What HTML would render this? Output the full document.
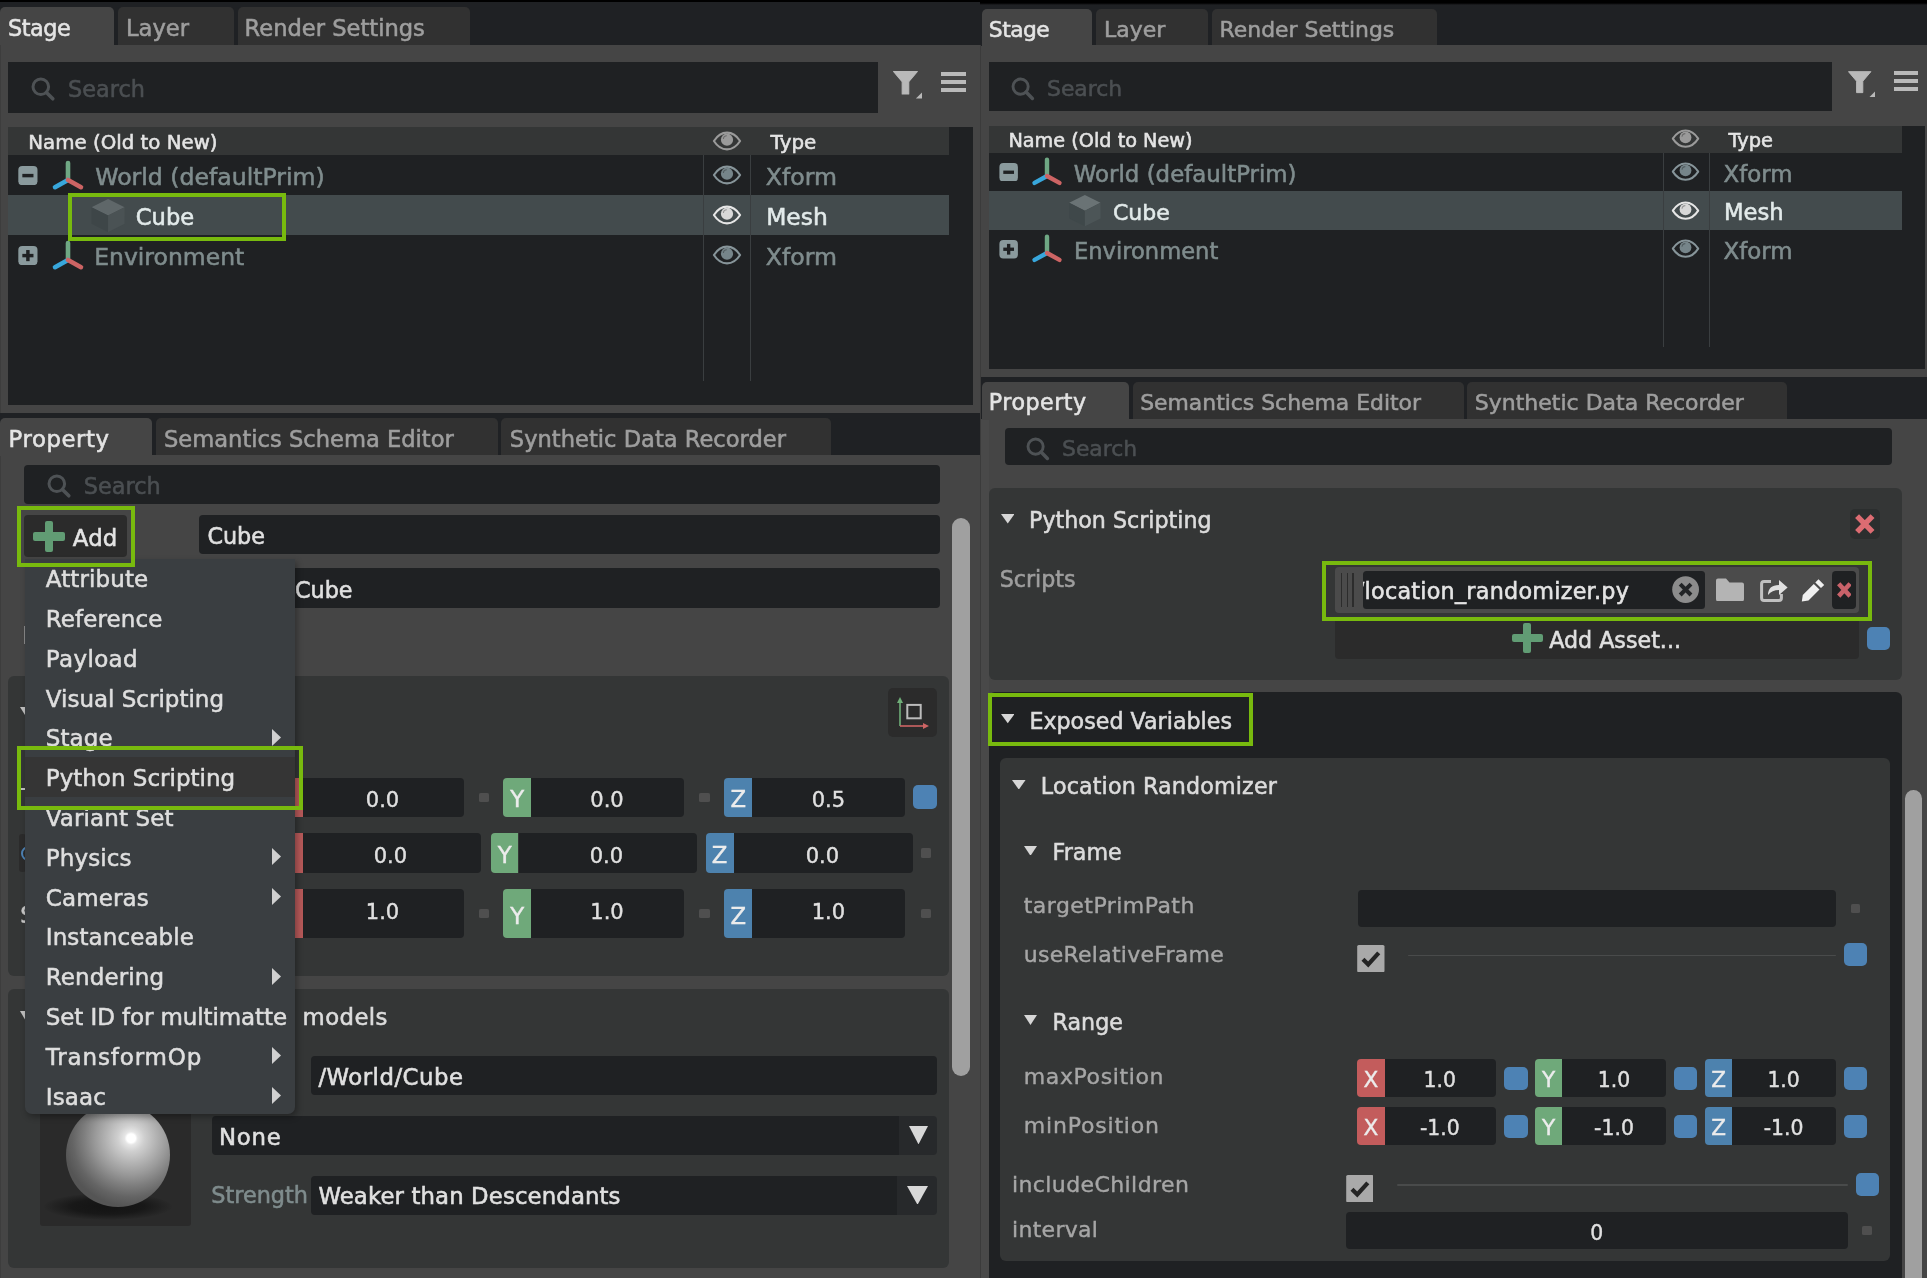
<!DOCTYPE html>
<html><head><meta charset="utf-8"><title>Stage and Property panels</title>
<style>
html,body{margin:0;padding:0;background:#454545;overflow:hidden;}
body{width:1927px;height:1278px;position:relative;overflow:hidden;font-family:"DejaVu Sans","Liberation Sans",sans-serif;}
.b{position:absolute;display:block;}
.t{position:absolute;white-space:nowrap;line-height:1;-webkit-text-stroke:0.55px currentColor;}
#root{position:absolute;left:0;top:0;width:1927px;height:1278px;overflow:hidden;will-change:transform;}
</style></head><body><div id="root">
<div class="b" style="left:0px;top:0px;width:980px;height:2px;background:#000;"></div>
<div class="b" style="left:0px;top:2px;width:980px;height:43px;background:#1f2124;"></div>
<div class="b" style="left:0px;top:45px;width:980px;height:368px;background:#454545;"></div>
<div class="b" style="left:0px;top:413px;width:980px;height:43px;background:#1f2124;"></div>
<div class="b" style="left:0px;top:455.4px;width:980px;height:822.6px;background:#454545;"></div>
<div class="b" style="left:0px;top:7px;width:114.4px;height:39px;background:#454545;border-radius:5px 5px 0 0;"></div>
<div class="b" style="left:118.2px;top:7px;width:115.8px;height:37.6px;background:#313131;border-radius:5px 5px 0 0;"></div>
<div class="b" style="left:237.7px;top:7px;width:231.9px;height:37.6px;background:#313131;border-radius:5px 5px 0 0;"></div>
<div class="t" style="left:8px;top:17px;font-size:22.4px;color:#e4e4e4;letter-spacing:-0.5px;">Stage</div>
<div class="t" style="left:125.9px;top:17px;font-size:22.7px;color:#9e9e9e;">Layer</div>
<div class="t" style="left:244.6px;top:17px;font-size:22.6px;color:#9e9e9e;">Render Settings</div>
<div class="b" style="left:7.6px;top:61.8px;width:870.1px;height:50.8px;background:#1f2123;"></div>
<svg class="b" style="left:29.7px;top:75.8px" width="27.6" height="27.6" viewBox="-10.8 -10.8 27.6 27.6"><circle cx="0" cy="0" r="7.8" fill="none" stroke="#4e5255" stroke-width="3"/><path d="M5.616 5.616 L12 12" stroke="#4e5255" stroke-width="3.6" stroke-linecap="round"/></svg>
<div class="t" style="left:68px;top:78px;font-size:22.4px;color:#4b4f52;">Search</div>
<svg class="b" style="left:893px;top:71px" width="29.5" height="27.5" viewBox="0 0 29 27"><path d="M0.5 0.5 L24 0.5 L15.5 10.5 L15.5 22.5 L9 22.5 L9 10.5 Z" fill="#b9b9b9" stroke="#b9b9b9" stroke-linejoin="round" stroke-width="1"/><path d="M28.5 21 L28.5 27 L22.5 27 Z" fill="#b9b9b9"/></svg>
<div class="b" style="left:941.3px;top:72px;width:24.3px;height:4.2px;background:#b9b9b9;"></div>
<div class="b" style="left:941.3px;top:79.9px;width:24.3px;height:4.2px;background:#b9b9b9;"></div>
<div class="b" style="left:941.3px;top:87.8px;width:24.3px;height:4.2px;background:#b9b9b9;"></div>
<div class="b" style="left:7.6px;top:127px;width:965px;height:277.6px;background:#1f2123;"></div>
<div class="b" style="left:7.6px;top:127px;width:941.4px;height:28.2px;background:#343636;"></div>
<div class="t" style="left:28.3px;top:133px;font-size:19.8px;color:#e4e4e4;">Name (Old to New)</div>
<div class="t" style="left:770.6px;top:133px;font-size:19.9px;color:#e4e4e4;">Type</div>
<svg class="b" style="left:710.6px;top:130.3px" width="32" height="22" viewBox="-16 -11 32 22"><path d="M-13.1 0 C-8.5 -7.2 -3.5 -8.4 0 -8.4 C3.5 -8.4 8.5 -7.2 13.1 0 C8.5 7.2 3.5 8.4 0 8.4 C-3.5 8.4 -8.5 7.2 -13.1 0 Z" fill="none" stroke="#9a9a9a" stroke-width="2.1" stroke-linejoin="round"/><circle cx="0" cy="-1.3" r="6.1" fill="#9a9a9a"/><path d="M-3.6 -2 A3.4 3.4 0 0 1 -0.2 -5.2" fill="none" stroke="#0000004d" stroke-width="1.1"/></svg>
<div class="b" style="left:7.6px;top:195.2px;width:941.4px;height:39.8px;background:#434b4d;"></div>
<div class="b" style="left:702.6px;top:155.2px;width:1.2px;height:225.8px;background:#3a3e40;"></div>
<div class="b" style="left:749.6px;top:155.2px;width:1.2px;height:225.8px;background:#3a3e40;"></div>
<svg class="b" style="left:18.3px;top:165.8px" width="19.8" height="19.2" viewBox="0 0 20 20"><rect x="0" y="0" width="20" height="20" rx="4.2" fill="#8a9a9d"/><rect x="4.2" y="8.2" width="11.6" height="3.6" fill="#1f2123"/></svg>
<svg class="b" style="left:47.6px;top:158.2px" width="40" height="36" viewBox="-20 -22 40 36" ><path d="M0 0 L0 -17" stroke="#6fa884" stroke-width="4.6" stroke-linecap="round"/><path d="M0 0 L-13 7.2" stroke="#38a7dc" stroke-width="4.6" stroke-linecap="round"/><path d="M0 0 L13 7.2" stroke="#cd6464" stroke-width="4.6" stroke-linecap="round"/></svg>
<div class="t" style="left:95.2px;top:166px;font-size:23.6px;color:#7f8c8d;">World (defaultPrim)</div>
<svg class="b" style="left:710.6px;top:164.1px" width="32" height="22" viewBox="-16 -11 32 22"><path d="M-13.1 0 C-8.5 -7.2 -3.5 -8.4 0 -8.4 C3.5 -8.4 8.5 -7.2 13.1 0 C8.5 7.2 3.5 8.4 0 8.4 C-3.5 8.4 -8.5 7.2 -13.1 0 Z" fill="none" stroke="#87959a" stroke-width="2.1" stroke-linejoin="round"/><circle cx="0" cy="-1.3" r="6.1" fill="#76858a"/><path d="M-3.6 -2 A3.4 3.4 0 0 1 -0.2 -5.2" fill="none" stroke="#0000004d" stroke-width="1.1"/></svg>
<div class="t" style="left:765.8px;top:166px;font-size:23.6px;color:#7f8c8d;">Xform</div>
<svg class="b" style="left:90.5px;top:199.4px" width="34.1" height="33.1" viewBox="0 0 32 32"><path d="M16 0 L32 8 L16 16 L0 8 Z" fill="#5f6769"/><path d="M0 8 L16 16 L16 32 L0 24 Z" fill="#3e4648"/><path d="M32 8 L16 16 L16 32 L32 24 Z" fill="#4a5254"/></svg>
<div class="t" style="left:135.8px;top:206px;font-size:22.6px;color:#e2eaea;">Cube</div>
<svg class="b" style="left:710.6px;top:204.1px" width="32" height="22" viewBox="-16 -11 32 22"><path d="M-13.1 0 C-8.5 -7.2 -3.5 -8.4 0 -8.4 C3.5 -8.4 8.5 -7.2 13.1 0 C8.5 7.2 3.5 8.4 0 8.4 C-3.5 8.4 -8.5 7.2 -13.1 0 Z" fill="none" stroke="#e6e6e6" stroke-width="2.1" stroke-linejoin="round"/><circle cx="0" cy="-1.3" r="6.1" fill="#d8d8d8"/><path d="M-3.6 -2 A3.4 3.4 0 0 1 -0.2 -5.2" fill="none" stroke="#0000004d" stroke-width="1.1"/></svg>
<div class="t" style="left:766.2px;top:206px;font-size:23.4px;color:#e2eaea;">Mesh</div>
<div class="b" style="left:67.9px;top:192.9px;width:218.3px;height:48.2px;border:4px solid #78ba0e;box-sizing:border-box"></div>
<svg class="b" style="left:18.3px;top:245.8px" width="19.8" height="19.2" viewBox="0 0 20 20"><rect x="0" y="0" width="20" height="20" rx="4.2" fill="#8a9a9d"/><rect x="4.2" y="8.2" width="11.6" height="3.6" fill="#1f2123"/><rect x="8.2" y="4.2" width="3.6" height="11.6" fill="#1f2123"/></svg>
<svg class="b" style="left:47.6px;top:238.2px" width="40" height="36" viewBox="-20 -22 40 36" ><path d="M0 0 L0 -17" stroke="#6fa884" stroke-width="4.6" stroke-linecap="round"/><path d="M0 0 L-13 7.2" stroke="#38a7dc" stroke-width="4.6" stroke-linecap="round"/><path d="M0 0 L13 7.2" stroke="#cd6464" stroke-width="4.6" stroke-linecap="round"/></svg>
<div class="t" style="left:94.2px;top:246px;font-size:23.5px;color:#7f8c8d;">Environment</div>
<svg class="b" style="left:710.6px;top:243.9px" width="32" height="22" viewBox="-16 -11 32 22"><path d="M-13.1 0 C-8.5 -7.2 -3.5 -8.4 0 -8.4 C3.5 -8.4 8.5 -7.2 13.1 0 C8.5 7.2 3.5 8.4 0 8.4 C-3.5 8.4 -8.5 7.2 -13.1 0 Z" fill="none" stroke="#87959a" stroke-width="2.1" stroke-linejoin="round"/><circle cx="0" cy="-1.3" r="6.1" fill="#76858a"/><path d="M-3.6 -2 A3.4 3.4 0 0 1 -0.2 -5.2" fill="none" stroke="#0000004d" stroke-width="1.1"/></svg>
<div class="t" style="left:765.8px;top:246px;font-size:23.6px;color:#7f8c8d;">Xform</div>
<div class="b" style="left:0px;top:418.3px;width:152px;height:38.1px;background:#454545;border-radius:5px 5px 0 0;"></div>
<div class="b" style="left:156.4px;top:418.3px;width:341.2px;height:37.1px;background:#313131;border-radius:5px 5px 0 0;"></div>
<div class="b" style="left:501.4px;top:418.3px;width:329.3px;height:37.1px;background:#313131;border-radius:5px 5px 0 0;"></div>
<div class="t" style="left:8.6px;top:428px;font-size:22.8px;color:#e4e4e4;letter-spacing:0.55px;">Property</div>
<div class="t" style="left:164px;top:428px;font-size:22.6px;color:#9e9e9e;">Semantics Schema Editor</div>
<div class="t" style="left:509.8px;top:428px;font-size:22.6px;color:#9e9e9e;">Synthetic Data Recorder</div>
<div class="b" style="left:24.2px;top:464.8px;width:915.4px;height:39.5px;background:#1f2123;border-radius:4px;"></div>
<svg class="b" style="left:46.3px;top:473px" width="27.6" height="27.6" viewBox="-10.8 -10.8 27.6 27.6"><circle cx="0" cy="0" r="7.8" fill="none" stroke="#4e5255" stroke-width="3"/><path d="M5.616 5.616 L12 12" stroke="#4e5255" stroke-width="3.6" stroke-linecap="round"/></svg>
<div class="t" style="left:83.8px;top:475px;font-size:22.4px;color:#4b4f52;">Search</div>
<div class="b" style="left:24.2px;top:515px;width:102.8px;height:42px;background:#2b2b2b;border-radius:4px;"></div>
<div class="b" style="left:44.56px;top:520.7px;width:8.48px;height:31.6px;background:#619c74;border-radius:2px;"></div>
<div class="b" style="left:32.8px;top:532.26px;width:32px;height:8.48px;background:#619c74;border-radius:2px;"></div>
<div class="t" style="left:72.8px;top:527px;font-size:22.8px;color:#e4e4e4;letter-spacing:0.2px;">Add</div>
<div class="b" style="left:199px;top:515px;width:740.6px;height:38.8px;background:#1f2123;border-radius:4px;"></div>
<div class="t" style="left:207.4px;top:525px;font-size:22.3px;color:#e0e0e0;">Cube</div>
<div class="b" style="left:199px;top:568.3px;width:740.6px;height:39.4px;background:#1f2123;border-radius:4px;"></div>
<div class="t" style="left:295px;top:579px;font-size:22.3px;color:#e0e0e0;">Cube</div>
<div class="b" style="left:23.5px;top:626px;width:2px;height:18px;background:#8a8a8a;"></div>
<div class="b" style="left:952.3px;top:517.5px;width:17.7px;height:558.3px;background:#a0a0a0;border-radius:9px;"></div>
<div class="b" style="left:8px;top:676px;width:941px;height:300px;background:#343636;border-radius:6px;"></div>
<div class="b" style="left:888px;top:687.8px;width:49px;height:49.2px;background:#2b2b2b;border-radius:5px;"></div>
<svg class="b" style="left:894.8px;top:696.2px;" width="34" height="34" viewBox="0 0 34 34"><path d="M5 30 L5 6" stroke="#6fae78" stroke-width="1.6"/><path d="M5 1 L2 7 L8 7 Z" fill="#6fae78"/><path d="M5 30 L29 30" stroke="#cd6464" stroke-width="1.6"/><path d="M34 30 L28 27 L28 33 Z" fill="#cd6464"/><rect x="12.3" y="8.9" width="13.4" height="13.4" fill="none" stroke="#bcbcbc" stroke-width="2"/></svg>
<svg class="b" style="left:19.6px;top:707px;" width="10" height="8" viewBox="0 0 10 8"><path d="M0 0 L10 0 L5 8 Z" fill="#c0c0c0"/></svg>
<div class="b" style="left:285px;top:777.5px;width:17.6px;height:39.5px;background:#b65959;border-radius:4px 0 0 4px;"></div>
<div class="b" style="left:302.6px;top:777.5px;width:161px;height:39.5px;background:#1f2123;border-radius:0 4px 4px 0;"></div>
<div class="t" style="left:382.5px;top:790px;font-size:21px;color:#e0e0e0;-webkit-text-stroke-width:0.4px;transform:translateX(-50%);">0.0</div>
<div class="b" style="left:478.8px;top:792.8px;width:10.2px;height:9px;background:#4f4f4f;border-radius:1.5px;"></div>
<div class="b" style="left:503.2px;top:777.5px;width:28.2px;height:39.5px;background:#6fa97a;border-radius:4px 0 0 4px;"></div>
<div class="b" style="left:531.4px;top:777.5px;width:153.1px;height:39.5px;background:#1f2123;border-radius:0 4px 4px 0;"></div>
<div class="t" style="left:517.3px;top:788px;font-size:22.8px;color:#ececec;-webkit-text-stroke-width:0.4px;transform:translateX(-50%);">Y</div>
<div class="t" style="left:607px;top:790px;font-size:21px;color:#e0e0e0;-webkit-text-stroke-width:0.4px;transform:translateX(-50%);">0.0</div>
<div class="b" style="left:699px;top:792.8px;width:11px;height:9px;background:#4f4f4f;border-radius:1.5px;"></div>
<div class="b" style="left:724px;top:777.5px;width:28.4px;height:39.5px;background:#4d82ae;border-radius:4px 0 0 4px;"></div>
<div class="b" style="left:752.4px;top:777.5px;width:152.8px;height:39.5px;background:#1f2123;border-radius:0 4px 4px 0;"></div>
<div class="t" style="left:738.2px;top:788px;font-size:22.8px;color:#ececec;-webkit-text-stroke-width:0.4px;transform:translateX(-50%);">Z</div>
<div class="t" style="left:828.4px;top:790px;font-size:21px;color:#e0e0e0;-webkit-text-stroke-width:0.4px;transform:translateX(-50%);">0.5</div>
<div class="b" style="left:913.4px;top:785px;width:24.1px;height:24.3px;background:#4d82b4;border-radius:5px;"></div>
<div class="b" style="left:285px;top:833px;width:17.6px;height:40px;background:#b65959;border-radius:4px 0 0 4px;"></div>
<div class="b" style="left:302.6px;top:833px;width:178.7px;height:40px;background:#1f2123;border-radius:0 4px 4px 0;"></div>
<div class="t" style="left:390.4px;top:846px;font-size:21px;color:#e0e0e0;-webkit-text-stroke-width:0.4px;transform:translateX(-50%);">0.0</div>
<div class="b" style="left:490.8px;top:833px;width:27.7px;height:40px;background:#6fa97a;border-radius:4px 0 0 4px;"></div>
<div class="b" style="left:518.5px;top:833px;width:178.7px;height:40px;background:#1f2123;border-radius:0 4px 4px 0;"></div>
<div class="t" style="left:504.65px;top:844px;font-size:22.8px;color:#ececec;-webkit-text-stroke-width:0.4px;transform:translateX(-50%);">Y</div>
<div class="t" style="left:606.4px;top:846px;font-size:21px;color:#e0e0e0;-webkit-text-stroke-width:0.4px;transform:translateX(-50%);">0.0</div>
<div class="b" style="left:705.6px;top:833px;width:28px;height:40px;background:#4d82ae;border-radius:4px 0 0 4px;"></div>
<div class="b" style="left:733.6px;top:833px;width:179.3px;height:40px;background:#1f2123;border-radius:0 4px 4px 0;"></div>
<div class="t" style="left:719.6px;top:844px;font-size:22.8px;color:#ececec;-webkit-text-stroke-width:0.4px;transform:translateX(-50%);">Z</div>
<div class="t" style="left:822.4px;top:846px;font-size:21px;color:#e0e0e0;-webkit-text-stroke-width:0.4px;transform:translateX(-50%);">0.0</div>
<div class="b" style="left:920.5px;top:848.4px;width:10.2px;height:9.2px;background:#4f4f4f;border-radius:1.5px;"></div>
<div class="b" style="left:19px;top:834px;width:7px;height:38px;background:#2b2b2b;border-radius:3px;"></div>
<div class="b" style="left:21.4px;top:846px;width:15px;height:15px;border:2.5px solid #4d82b4;border-radius:50%;box-sizing:border-box"></div>
<div class="b" style="left:20.6px;top:787.5px;width:5.4px;height:2px;background:#c0c0c0;"></div>
<div class="t" style="left:20.2px;top:904px;font-size:22.8px;color:#c8c8c8;">S</div>
<div class="b" style="left:285px;top:889px;width:17.6px;height:49px;background:#b65959;border-radius:4px 0 0 4px;"></div>
<div class="b" style="left:302.6px;top:889px;width:161px;height:49px;background:#1f2123;border-radius:0 4px 4px 0;"></div>
<div class="t" style="left:382.5px;top:902px;font-size:21px;color:#e0e0e0;-webkit-text-stroke-width:0.4px;transform:translateX(-50%);">1.0</div>
<div class="b" style="left:478.8px;top:908.6px;width:10.2px;height:9px;background:#4f4f4f;border-radius:1.5px;"></div>
<div class="b" style="left:503.2px;top:889px;width:28.2px;height:49px;background:#6fa97a;border-radius:4px 0 0 4px;"></div>
<div class="b" style="left:531.4px;top:889px;width:153.1px;height:49px;background:#1f2123;border-radius:0 4px 4px 0;"></div>
<div class="t" style="left:517.3px;top:905px;font-size:22.8px;color:#ececec;-webkit-text-stroke-width:0.4px;transform:translateX(-50%);">Y</div>
<div class="t" style="left:607px;top:902px;font-size:21px;color:#e0e0e0;-webkit-text-stroke-width:0.4px;transform:translateX(-50%);">1.0</div>
<div class="b" style="left:699px;top:908.6px;width:11px;height:9px;background:#4f4f4f;border-radius:1.5px;"></div>
<div class="b" style="left:724px;top:889px;width:28.4px;height:49px;background:#4d82ae;border-radius:4px 0 0 4px;"></div>
<div class="b" style="left:752.4px;top:889px;width:152.8px;height:49px;background:#1f2123;border-radius:0 4px 4px 0;"></div>
<div class="t" style="left:738.2px;top:905px;font-size:22.8px;color:#ececec;-webkit-text-stroke-width:0.4px;transform:translateX(-50%);">Z</div>
<div class="t" style="left:828.4px;top:902px;font-size:21px;color:#e0e0e0;-webkit-text-stroke-width:0.4px;transform:translateX(-50%);">1.0</div>
<div class="b" style="left:920.5px;top:908.6px;width:10.2px;height:9px;background:#4f4f4f;border-radius:1.5px;"></div>
<div class="b" style="left:8px;top:988.6px;width:941px;height:279.7px;background:#343636;border-radius:6px;"></div>
<svg class="b" style="left:19.6px;top:1011px;" width="10" height="8.5" viewBox="0 0 10 8.5"><path d="M0 0 L10 0 L5 8.5 Z" fill="#c0c0c0"/></svg>
<div class="t" style="right:1631.5px;top:1006px;font-size:22.8px;color:#dcdcdc">Materials on selected</div>
<div class="t" style="left:302.6px;top:1006px;font-size:22.8px;color:#dcdcdc;letter-spacing:0.4px;">models</div>
<div class="t" style="left:48px;top:701px;font-size:22.8px;color:#dcdcdc">Transform</div>
<div class="b" style="left:310.7px;top:1056px;width:626.3px;height:39.4px;background:#1f2123;border-radius:4px;"></div>
<div class="t" style="left:318.4px;top:1066px;font-size:22.8px;color:#e0e0e0;letter-spacing:0.5px;">/World/Cube</div>
<div class="b" style="left:40.3px;top:1075px;width:150.3px;height:151.2px;background:#2a2a2a;border-radius:3px;"></div>
<div class="b" style="left:44px;top:1193px;width:128px;height:27px;border-radius:50%;background:radial-gradient(ellipse at center,#131313 0%,#181818 40%,#2b2b2b00 72%)"></div>
<div class="b" style="left:65.8px;top:1102.9px;width:104.6px;height:104.6px;border-radius:50%;background:radial-gradient(circle at 62.6% 33.9%,#ffffff 0%,#ffffff 4.6%,#e6e6e6 7%,#cfcfcf 14%,#b4b4b4 26%,#9a9a9a 38%,#7e7e7e 50%,#646464 62%,#555555 72%,#565656 100%)"></div>
<div class="b" style="left:211.6px;top:1115.7px;width:687.8px;height:39.5px;background:#1f2123;border-radius:4px 0 0 4px;"></div>
<div class="b" style="left:899.4px;top:1115.7px;width:37.6px;height:39.5px;background:#27292b;border-radius:0 4px 4px 0;"></div>
<svg class="b" style="left:909px;top:1126px;" width="19" height="18.4" viewBox="0 0 19 18.4"><path d="M0 0 L19 0 L9.5 18.4 Z" fill="#d8d8d8"/></svg>
<div class="t" style="left:219px;top:1126px;font-size:22.8px;color:#e0e0e0;letter-spacing:0.8px;">None</div>
<div class="t" style="left:211.2px;top:1184px;font-size:22.4px;color:#7f8c8d;">Strength</div>
<div class="b" style="left:310.7px;top:1175.5px;width:586.7px;height:39.5px;background:#1f2123;border-radius:4px 0 0 4px;"></div>
<div class="b" style="left:897.4px;top:1175.5px;width:39.6px;height:39.5px;background:#27292b;border-radius:0 4px 4px 0;"></div>
<svg class="b" style="left:907px;top:1185.6px;" width="21" height="18.8" viewBox="0 0 21 18.8"><path d="M0 0 L21 0 L10.5 18.8 Z" fill="#d8d8d8"/></svg>
<div class="t" style="left:318.4px;top:1185px;font-size:22.8px;color:#e0e0e0;letter-spacing:0.12px;">Weaker than Descendants</div>
<div class="b" style="left:25.4px;top:559px;width:270px;height:555.4px;background:#3a3e41;border-radius:0 0 7px 7px;box-shadow:2px 3px 6px rgba(0,0,0,0.32);"></div>
<div class="b" style="left:25.4px;top:757.4px;width:270px;height:39.8px;background:#353535;"></div>
<div class="t" style="left:45.8px;top:568px;font-size:23px;color:#dedede;letter-spacing:0.1px;">Attribute</div>
<div class="t" style="left:45.8px;top:608px;font-size:23px;color:#dedede;letter-spacing:0.1px;">Reference</div>
<div class="t" style="left:45.8px;top:648px;font-size:23px;color:#dedede;letter-spacing:0.35px;">Payload</div>
<div class="t" style="left:45.8px;top:688px;font-size:23px;color:#dedede;">Visual Scripting</div>
<div class="t" style="left:45.8px;top:727px;font-size:23px;color:#dedede;letter-spacing:0.1px;">Stage</div>
<svg class="b" style="left:271.6px;top:728.8px;" width="9" height="17" viewBox="0 0 9 17"><path d="M0 0 L9 8.5 L0 17 Z" fill="#d0d0d0"/></svg>
<div class="t" style="left:45.8px;top:767px;font-size:23px;color:#dedede;">Python Scripting</div>
<div class="t" style="left:45.8px;top:807px;font-size:23px;color:#dedede;letter-spacing:0.1px;">Variant Set</div>
<div class="t" style="left:45.8px;top:847px;font-size:23px;color:#dedede;letter-spacing:0.1px;">Physics</div>
<svg class="b" style="left:271.6px;top:848.2px;" width="9" height="17" viewBox="0 0 9 17"><path d="M0 0 L9 8.5 L0 17 Z" fill="#d0d0d0"/></svg>
<div class="t" style="left:45.8px;top:887px;font-size:23px;color:#dedede;letter-spacing:0.1px;">Cameras</div>
<svg class="b" style="left:271.6px;top:888px;" width="9" height="17" viewBox="0 0 9 17"><path d="M0 0 L9 8.5 L0 17 Z" fill="#d0d0d0"/></svg>
<div class="t" style="left:45.8px;top:926px;font-size:23px;color:#dedede;letter-spacing:0.1px;">Instanceable</div>
<div class="t" style="left:45.8px;top:966px;font-size:23px;color:#dedede;letter-spacing:0.1px;">Rendering</div>
<svg class="b" style="left:271.6px;top:967.6px;" width="9" height="17" viewBox="0 0 9 17"><path d="M0 0 L9 8.5 L0 17 Z" fill="#d0d0d0"/></svg>
<div class="t" style="left:45.8px;top:1006px;font-size:23px;color:#dedede;letter-spacing:-0.1px;">Set ID for multimatte</div>
<div class="t" style="left:45.8px;top:1046px;font-size:23px;color:#dedede;letter-spacing:0.85px;">TransformOp</div>
<svg class="b" style="left:271.6px;top:1047.2px;" width="9" height="17" viewBox="0 0 9 17"><path d="M0 0 L9 8.5 L0 17 Z" fill="#d0d0d0"/></svg>
<div class="t" style="left:45.8px;top:1086px;font-size:23px;color:#dedede;letter-spacing:0.1px;">Isaac</div>
<svg class="b" style="left:271.6px;top:1087px;" width="9" height="17" viewBox="0 0 9 17"><path d="M0 0 L9 8.5 L0 17 Z" fill="#d0d0d0"/></svg>
<div class="b" style="left:16.6px;top:746.3px;width:286.2px;height:63.9px;border:4px solid #78ba0e;box-sizing:border-box"></div>
<div class="b" style="left:16.6px;top:505.8px;width:118.6px;height:61.5px;border:4px solid #78ba0e;box-sizing:border-box"></div>
<div class="b" style="left:0px;top:45px;width:1.4px;height:368px;background:#3d3d3d;"></div>
<div class="b" style="left:0px;top:456px;width:1.4px;height:822px;background:#3d3d3d;"></div>
<div class="b" style="left:979.6px;top:0px;width:947.4px;height:46px;background:#1f2124;"></div>
<div class="b" style="left:979.6px;top:0;width:947.4px;height:5px;background:linear-gradient(#000 0,#000 60%,#1f2124 100%)"></div>
<div class="b" style="left:981.5px;top:45.3px;width:945.5px;height:331.7px;background:#454545;"></div>
<div class="b" style="left:979.6px;top:377px;width:947.4px;height:42px;background:#1f2124;"></div>
<div class="b" style="left:981.5px;top:418.7px;width:945.5px;height:859.3px;background:#454545;"></div>
<div class="b" style="left:979.6px;top:45.3px;width:1.8px;height:1232.7px;background:#3b3b3b;"></div>
<div class="b" style="left:981.4px;top:419px;width:7.8px;height:859px;background:#494949;"></div>
<div class="b" style="left:981.5px;top:9px;width:110.7px;height:37px;background:#454545;border-radius:5px 5px 0 0;"></div>
<div class="b" style="left:1096px;top:9px;width:112px;height:36px;background:#313131;border-radius:5px 5px 0 0;"></div>
<div class="b" style="left:1211.7px;top:9px;width:225.1px;height:36px;background:#313131;border-radius:5px 5px 0 0;"></div>
<div class="t" style="left:988.8px;top:19px;font-size:21.8px;color:#e4e4e4;letter-spacing:-0.5px;">Stage</div>
<div class="t" style="left:1104px;top:19px;font-size:22px;color:#9e9e9e;">Layer</div>
<div class="t" style="left:1219.6px;top:19px;font-size:21.9px;color:#9e9e9e;">Render Settings</div>
<div class="b" style="left:989.2px;top:61.8px;width:842.8px;height:49.6px;background:#1f2123;"></div>
<svg class="b" style="left:1009.8px;top:75.8px" width="27.2" height="27.2" viewBox="-10.6 -10.6 27.2 27.2"><circle cx="0" cy="0" r="7.6" fill="none" stroke="#4e5255" stroke-width="2.9"/><path d="M5.472 5.472 L11.8 11.8" stroke="#4e5255" stroke-width="3.5" stroke-linecap="round"/></svg>
<div class="t" style="left:1047px;top:78px;font-size:21.9px;color:#4b4f52;">Search</div>
<svg class="b" style="left:1847.7px;top:70.7px" width="27.7" height="26.1" viewBox="0 0 29 27"><path d="M0.5 0.5 L24 0.5 L15.5 10.5 L15.5 22.5 L9 22.5 L9 10.5 Z" fill="#b9b9b9" stroke="#b9b9b9" stroke-linejoin="round" stroke-width="1"/><path d="M28.5 21 L28.5 27 L22.5 27 Z" fill="#b9b9b9"/></svg>
<div class="b" style="left:1894px;top:71.2px;width:23.6px;height:4.158px;background:#b9b9b9;"></div>
<div class="b" style="left:1894px;top:79.021px;width:23.6px;height:4.158px;background:#b9b9b9;"></div>
<div class="b" style="left:1894px;top:86.842px;width:23.6px;height:4.158px;background:#b9b9b9;"></div>
<div class="b" style="left:989.2px;top:126.4px;width:935.6px;height:243.1px;background:#1f2123;"></div>
<div class="b" style="left:989.2px;top:126.4px;width:913.1px;height:26.4px;background:#343636;"></div>
<div class="t" style="left:1008.4px;top:131px;font-size:19.25px;color:#e4e4e4;">Name (Old to New)</div>
<div class="t" style="left:1728.4px;top:131px;font-size:19.4px;color:#e4e4e4;">Type</div>
<svg class="b" style="left:1670.48px;top:128.43px" width="31.04" height="21.34" viewBox="-16 -11 32 22"><path d="M-13.1 0 C-8.5 -7.2 -3.5 -8.4 0 -8.4 C3.5 -8.4 8.5 -7.2 13.1 0 C8.5 7.2 3.5 8.4 0 8.4 C-3.5 8.4 -8.5 7.2 -13.1 0 Z" fill="none" stroke="#9a9a9a" stroke-width="2.1" stroke-linejoin="round"/><circle cx="0" cy="-1.3" r="6.1" fill="#9a9a9a"/><path d="M-3.6 -2 A3.4 3.4 0 0 1 -0.2 -5.2" fill="none" stroke="#0000004d" stroke-width="1.1"/></svg>
<div class="b" style="left:989.2px;top:190.7px;width:913.1px;height:39.3px;background:#434b4d;"></div>
<div class="b" style="left:1663.1px;top:152.8px;width:1.1px;height:193.8px;background:#3a3e40;"></div>
<div class="b" style="left:1708.6px;top:152.8px;width:1.1px;height:193.8px;background:#3a3e40;"></div>
<svg class="b" style="left:998.7px;top:162.7px" width="19.3" height="18.5" viewBox="0 0 20 20"><rect x="0" y="0" width="20" height="20" rx="4.2" fill="#8a9a9d"/><rect x="4.2" y="8.2" width="11.6" height="3.6" fill="#1f2123"/></svg>
<svg class="b" style="left:1027px;top:153.6px" width="40" height="36" viewBox="-20 -22 40 36" ><path d="M0 0 L0 -16.32" stroke="#6fa884" stroke-width="4.416" stroke-linecap="round"/><path d="M0 0 L-12.48 6.912" stroke="#38a7dc" stroke-width="4.416" stroke-linecap="round"/><path d="M0 0 L12.48 6.912" stroke="#cd6464" stroke-width="4.416" stroke-linecap="round"/></svg>
<div class="t" style="left:1073.8px;top:163px;font-size:22.9px;color:#7f8c8d;">World (defaultPrim)</div>
<svg class="b" style="left:1670.48px;top:161.13px" width="31.04" height="21.34" viewBox="-16 -11 32 22"><path d="M-13.1 0 C-8.5 -7.2 -3.5 -8.4 0 -8.4 C3.5 -8.4 8.5 -7.2 13.1 0 C8.5 7.2 3.5 8.4 0 8.4 C-3.5 8.4 -8.5 7.2 -13.1 0 Z" fill="none" stroke="#87959a" stroke-width="2.1" stroke-linejoin="round"/><circle cx="0" cy="-1.3" r="6.1" fill="#76858a"/><path d="M-3.6 -2 A3.4 3.4 0 0 1 -0.2 -5.2" fill="none" stroke="#0000004d" stroke-width="1.1"/></svg>
<div class="t" style="left:1723.6px;top:163px;font-size:22.9px;color:#7f8c8d;">Xform</div>
<svg class="b" style="left:1069.3px;top:194.5px" width="31.7" height="31.3" viewBox="0 0 32 32"><path d="M16 0 L32 8 L16 16 L0 8 Z" fill="#6a7375"/><path d="M0 8 L16 16 L16 32 L0 24 Z" fill="#3f484a"/><path d="M32 8 L16 16 L16 32 L32 24 Z" fill="#4c5557"/></svg>
<div class="t" style="left:1113px;top:202px;font-size:22px;color:#e2eaea;">Cube</div>
<svg class="b" style="left:1670.48px;top:199.93px" width="31.04" height="21.34" viewBox="-16 -11 32 22"><path d="M-13.1 0 C-8.5 -7.2 -3.5 -8.4 0 -8.4 C3.5 -8.4 8.5 -7.2 13.1 0 C8.5 7.2 3.5 8.4 0 8.4 C-3.5 8.4 -8.5 7.2 -13.1 0 Z" fill="none" stroke="#e6e6e6" stroke-width="2.1" stroke-linejoin="round"/><circle cx="0" cy="-1.3" r="6.1" fill="#d8d8d8"/><path d="M-3.6 -2 A3.4 3.4 0 0 1 -0.2 -5.2" fill="none" stroke="#0000004d" stroke-width="1.1"/></svg>
<div class="t" style="left:1724px;top:201px;font-size:22.7px;color:#e2eaea;">Mesh</div>
<svg class="b" style="left:998.7px;top:240px" width="19.3" height="18.5" viewBox="0 0 20 20"><rect x="0" y="0" width="20" height="20" rx="4.2" fill="#8a9a9d"/><rect x="4.2" y="8.2" width="11.6" height="3.6" fill="#1f2123"/><rect x="8.2" y="4.2" width="3.6" height="11.6" fill="#1f2123"/></svg>
<svg class="b" style="left:1027px;top:230.6px" width="40" height="36" viewBox="-20 -22 40 36" ><path d="M0 0 L0 -16.32" stroke="#6fa884" stroke-width="4.416" stroke-linecap="round"/><path d="M0 0 L-12.48 6.912" stroke="#38a7dc" stroke-width="4.416" stroke-linecap="round"/><path d="M0 0 L12.48 6.912" stroke="#cd6464" stroke-width="4.416" stroke-linecap="round"/></svg>
<div class="t" style="left:1074px;top:240px;font-size:22.6px;color:#7f8c8d;">Environment</div>
<svg class="b" style="left:1670.48px;top:238.33px" width="31.04" height="21.34" viewBox="-16 -11 32 22"><path d="M-13.1 0 C-8.5 -7.2 -3.5 -8.4 0 -8.4 C3.5 -8.4 8.5 -7.2 13.1 0 C8.5 7.2 3.5 8.4 0 8.4 C-3.5 8.4 -8.5 7.2 -13.1 0 Z" fill="none" stroke="#87959a" stroke-width="2.1" stroke-linejoin="round"/><circle cx="0" cy="-1.3" r="6.1" fill="#76858a"/><path d="M-3.6 -2 A3.4 3.4 0 0 1 -0.2 -5.2" fill="none" stroke="#0000004d" stroke-width="1.1"/></svg>
<div class="t" style="left:1723.6px;top:240px;font-size:22.9px;color:#7f8c8d;">Xform</div>
<div class="b" style="left:981.5px;top:382.2px;width:147.1px;height:37.4px;background:#454545;border-radius:5px 5px 0 0;"></div>
<div class="b" style="left:1133px;top:382.2px;width:330.7px;height:36.5px;background:#313131;border-radius:5px 5px 0 0;"></div>
<div class="b" style="left:1467px;top:382.2px;width:320.4px;height:36.5px;background:#313131;border-radius:5px 5px 0 0;"></div>
<div class="t" style="left:988.8px;top:391px;font-size:22.2px;color:#e4e4e4;letter-spacing:0.5px;">Property</div>
<div class="t" style="left:1140.2px;top:392px;font-size:21.9px;color:#9e9e9e;">Semantics Schema Editor</div>
<div class="t" style="left:1474.8px;top:392px;font-size:22px;color:#9e9e9e;">Synthetic Data Recorder</div>
<div class="b" style="left:1004.5px;top:428px;width:887.7px;height:37.4px;background:#1f2123;border-radius:4px;"></div>
<svg class="b" style="left:1025.4px;top:435.8px" width="27.2" height="27.2" viewBox="-10.6 -10.6 27.2 27.2"><circle cx="0" cy="0" r="7.6" fill="none" stroke="#4e5255" stroke-width="2.9"/><path d="M5.472 5.472 L11.8 11.8" stroke="#4e5255" stroke-width="3.5" stroke-linecap="round"/></svg>
<div class="t" style="left:1062px;top:438px;font-size:21.9px;color:#4b4f52;">Search</div>
<div class="b" style="left:989.2px;top:487.7px;width:913px;height:192.3px;background:#343636;border-radius:6px;"></div>
<svg class="b" style="left:1000.7px;top:514.4px;" width="13.5" height="9.6" viewBox="0 0 13.5 9.6"><path d="M0 0 L13.5 0 L6.75 9.6 Z" fill="#d6d6d6"/></svg>
<div class="t" style="left:1029px;top:509px;font-size:22.2px;color:#dcdcdc;">Python Scripting</div>
<div class="b" style="left:1850.4px;top:509.1px;width:29.9px;height:29.9px;background:#2b2e2e;border-radius:5px;"></div>
<svg class="b" style="left:1855.3px;top:514.4px;" width="19.6" height="19.9" viewBox="0 0 19.6 19.9"><path d="M2.0625 2.0625 L17.5375 17.8375 M17.5375 2.0625 L2.0625 17.8375" stroke="#dc6c72" stroke-width="5.5" stroke-linecap="butt"/></svg>
<div class="t" style="left:999.7px;top:568px;font-size:22.2px;color:#9e9e9e;">Scripts</div>
<div class="b" style="left:1335px;top:617px;width:524px;height:42.3px;background:#2b2b2b;border-radius:0 0 4px 4px;"></div>
<div class="b" style="left:1334.6px;top:567.4px;width:524.4px;height:45.4px;background:#4b4b4b;border-radius:4px;"></div>
<div class="b" style="left:1340.5px;top:572.6px;width:1.7px;height:34.4px;background:#2c2c2c;"></div>
<div class="b" style="left:1346.5px;top:572.6px;width:1.7px;height:34.4px;background:#2c2c2c;"></div>
<div class="b" style="left:1352.2px;top:572.6px;width:1.7px;height:34.4px;background:#2c2c2c;"></div>
<div class="b" style="left:1363.2px;top:570.8px;width:341.6px;height:38px;background:#1f2123;border-radius:3.5px;"></div>
<div class="b" style="left:1363px;top:570.4px;width:341.8px;height:38.1px;overflow:hidden"><div class="t" style="left:-6.2px;top:9.6px;font-size:22.3px;letter-spacing:0.24px;color:#e4e4e4">/location_randomizer.py</div></div>
<svg class="b" style="left:1672.2px;top:576px;" width="27.2" height="27.2" viewBox="0 0 27.2 27.2"><circle cx="13.6" cy="13.6" r="13.4" fill="#8c8c8c"/><path d="M8.2 8.2 L19 19 M19 8.2 L8.2 19" stroke="#222426" stroke-width="4" stroke-linecap="butt"/></svg>
<svg class="b" style="left:1716px;top:578px;" width="28" height="23.4" viewBox="0 0 28 23.4"><path d="M0 2.5 Q0 0.5 2 0.5 L10 0.5 L13.5 4.5 L26 4.5 Q28 4.5 28 6.5 L28 21 Q28 23.4 26 23.4 L2 23.4 Q0 23.4 0 21 Z" fill="#b4b4b4"/></svg>
<svg class="b" style="left:1760.4px;top:577px;" width="28" height="25" viewBox="0 0 28 25"><path d="M11 4.5 L4 4.5 Q1.6 4.5 1.6 7 L1.6 21 Q1.6 23.4 4 23.4 L19 23.4 Q21.4 23.4 21.4 21 L21.4 17" fill="none" stroke="#c0c0c0" stroke-width="3"/><path d="M8 18 Q8 8 19 8 L19 3 L27.6 10.5 L19 18 L19 13 Q12 13 8 18 Z" fill="#e0e0e0"/></svg>
<svg class="b" style="left:1801px;top:577.5px;" width="24.4" height="24.3" viewBox="0 0 24.4 24.3"><path d="M17.5 1.2 L23.2 6.9 L20 10.1 L14.3 4.4 Z M12.8 5.9 L18.5 11.6 L7.5 22.6 L0.8 23.6 L1.8 16.9 Z" fill="#f0f0f0"/></svg>
<div class="b" style="left:1832.4px;top:570.8px;width:23.4px;height:38px;background:#1f2123;border-radius:4px;"></div>
<svg class="b" style="left:1836.7px;top:581.8px;" width="14.8" height="15.8" viewBox="0 0 14.8 15.8"><path d="M1.6875 1.6875 L13.1125 14.1125 M13.1125 1.6875 L1.6875 14.1125" stroke="#c9626a" stroke-width="4.5" stroke-linecap="butt"/></svg>
<div class="b" style="left:1523.21px;top:623px;width:8.0825px;height:30.4px;background:#619c74;border-radius:2px;"></div>
<div class="b" style="left:1512px;top:634.159px;width:30.5px;height:8.0825px;background:#619c74;border-radius:2px;"></div>
<div class="t" style="left:1549.2px;top:629px;font-size:22.2px;color:#e0e0e0;">Add Asset...</div>
<div class="b" style="left:1867.2px;top:626.8px;width:23.2px;height:22.9px;background:#4d82b4;border-radius:5px;"></div>
<div class="b" style="left:1322.1px;top:561px;width:549.7px;height:59.5px;border:4.4px solid #78ba0e;box-sizing:border-box"></div>
<div class="b" style="left:989.2px;top:692.1px;width:913.1px;height:585.9px;background:#1f2123;border-radius:6px 6px 0 0;"></div>
<svg class="b" style="left:1000.7px;top:714.3px;" width="13.5" height="9.3" viewBox="0 0 13.5 9.3"><path d="M0 0 L13.5 0 L6.75 9.3 Z" fill="#d6d6d6"/></svg>
<div class="t" style="left:1029.4px;top:710px;font-size:22.2px;color:#dcdcdc;">Exposed Variables</div>
<div class="b" style="left:987.8px;top:692.7px;width:264.8px;height:53px;border:4.4px solid #78ba0e;box-sizing:border-box"></div>
<div class="b" style="left:1000.2px;top:757.5px;width:889.9px;height:503.2px;background:#343636;border-radius:6px;"></div>
<svg class="b" style="left:1012px;top:779.9px;" width="13.6" height="9.6" viewBox="0 0 13.6 9.6"><path d="M0 0 L13.6 0 L6.8 9.6 Z" fill="#d6d6d6"/></svg>
<div class="t" style="left:1040.8px;top:775px;font-size:22.2px;color:#dcdcdc;letter-spacing:0.15px;">Location Randomizer</div>
<svg class="b" style="left:1024px;top:845.6px;" width="13" height="9.8" viewBox="0 0 13 9.8"><path d="M0 0 L13 0 L6.5 9.8 Z" fill="#d6d6d6"/></svg>
<div class="t" style="left:1052.6px;top:841px;font-size:22.2px;color:#dcdcdc;">Frame</div>
<div class="t" style="left:1023.8px;top:895px;font-size:22px;color:#a6a6a6;-webkit-text-stroke-width:0.4px;letter-spacing:0.45px;">targetPrimPath</div>
<div class="b" style="left:1358px;top:889.7px;width:477.7px;height:37.6px;background:#1f2123;border-radius:4px;"></div>
<div class="b" style="left:1851px;top:904px;width:9.4px;height:8.8px;background:#4f4f4f;border-radius:1.5px;"></div>
<div class="t" style="left:1023.8px;top:944px;font-size:22px;color:#a6a6a6;-webkit-text-stroke-width:0.4px;letter-spacing:0.25px;">useRelativeFrame</div>
<svg class="b" style="left:1357.4px;top:944.9px;" width="27.7" height="27.3" viewBox="0 0 26 26"><rect x="0" y="0" width="26" height="26" rx="1.5" fill="#a9a9a9"/><path d="M5.5 13.5 L10.5 18.5 L20.5 7.5" fill="none" stroke="#242424" stroke-width="4"/></svg>
<div class="b" style="left:1408.3px;top:954.5px;width:427.4px;height:1.8px;background:#494b4b;border-radius:1px;"></div>
<div class="b" style="left:1843.8px;top:943.3px;width:23.4px;height:22.4px;background:#4d82b4;border-radius:5px;"></div>
<svg class="b" style="left:1024px;top:1015.4px;" width="13" height="9.9" viewBox="0 0 13 9.9"><path d="M0 0 L13 0 L6.5 9.9 Z" fill="#d6d6d6"/></svg>
<div class="t" style="left:1052.6px;top:1011px;font-size:22.2px;color:#dcdcdc;">Range</div>
<div class="t" style="left:1023.8px;top:1066px;font-size:22px;color:#a6a6a6;-webkit-text-stroke-width:0.4px;letter-spacing:0.6px;">maxPosition</div>
<div class="b" style="left:1357.4px;top:1059.3px;width:27.2px;height:37.9px;background:#c35c5c;border-radius:4px 0 0 4px;"></div>
<div class="b" style="left:1384.6px;top:1059.3px;width:111.6px;height:37.9px;background:#1f2123;border-radius:0 4px 4px 0;"></div>
<div class="t" style="left:1371px;top:1069px;font-size:21.6px;color:#ececec;-webkit-text-stroke-width:0.4px;transform:translateX(-50%);">X</div>
<div class="t" style="left:1439.8px;top:1070px;font-size:20.4px;color:#e0e0e0;-webkit-text-stroke-width:0.4px;transform:translateX(-50%);">1.0</div>
<div class="b" style="left:1535.4px;top:1059.3px;width:26.6px;height:37.9px;background:#6fa97a;border-radius:4px 0 0 4px;"></div>
<div class="b" style="left:1562px;top:1059.3px;width:104.4px;height:37.9px;background:#1f2123;border-radius:0 4px 4px 0;"></div>
<div class="t" style="left:1548.7px;top:1069px;font-size:21.6px;color:#ececec;-webkit-text-stroke-width:0.4px;transform:translateX(-50%);">Y</div>
<div class="t" style="left:1614px;top:1070px;font-size:20.4px;color:#e0e0e0;-webkit-text-stroke-width:0.4px;transform:translateX(-50%);">1.0</div>
<div class="b" style="left:1705.3px;top:1059.3px;width:26.7px;height:37.9px;background:#4d82ae;border-radius:4px 0 0 4px;"></div>
<div class="b" style="left:1732px;top:1059.3px;width:103.7px;height:37.9px;background:#1f2123;border-radius:0 4px 4px 0;"></div>
<div class="t" style="left:1718.65px;top:1069px;font-size:21.6px;color:#ececec;-webkit-text-stroke-width:0.4px;transform:translateX(-50%);">Z</div>
<div class="t" style="left:1783.6px;top:1070px;font-size:20.4px;color:#e0e0e0;-webkit-text-stroke-width:0.4px;transform:translateX(-50%);">1.0</div>
<div class="b" style="left:1504.4px;top:1066.85px;width:23.2px;height:22.8px;background:#4d82b4;border-radius:5px;"></div>
<div class="b" style="left:1674px;top:1066.85px;width:23.2px;height:22.8px;background:#4d82b4;border-radius:5px;"></div>
<div class="b" style="left:1843.8px;top:1066.85px;width:23.2px;height:22.8px;background:#4d82b4;border-radius:5px;"></div>
<div class="t" style="left:1023.8px;top:1115px;font-size:22px;color:#a6a6a6;-webkit-text-stroke-width:0.4px;letter-spacing:0.8px;">minPosition</div>
<div class="b" style="left:1357.4px;top:1107.4px;width:27.2px;height:38.1px;background:#c35c5c;border-radius:4px 0 0 4px;"></div>
<div class="b" style="left:1384.6px;top:1107.4px;width:111.6px;height:38.1px;background:#1f2123;border-radius:0 4px 4px 0;"></div>
<div class="t" style="left:1371px;top:1117px;font-size:21.6px;color:#ececec;-webkit-text-stroke-width:0.4px;transform:translateX(-50%);">X</div>
<div class="t" style="left:1439.8px;top:1118px;font-size:20.4px;color:#e0e0e0;-webkit-text-stroke-width:0.4px;transform:translateX(-50%);">-1.0</div>
<div class="b" style="left:1535.4px;top:1107.4px;width:26.6px;height:38.1px;background:#6fa97a;border-radius:4px 0 0 4px;"></div>
<div class="b" style="left:1562px;top:1107.4px;width:104.4px;height:38.1px;background:#1f2123;border-radius:0 4px 4px 0;"></div>
<div class="t" style="left:1548.7px;top:1117px;font-size:21.6px;color:#ececec;-webkit-text-stroke-width:0.4px;transform:translateX(-50%);">Y</div>
<div class="t" style="left:1614px;top:1118px;font-size:20.4px;color:#e0e0e0;-webkit-text-stroke-width:0.4px;transform:translateX(-50%);">-1.0</div>
<div class="b" style="left:1705.3px;top:1107.4px;width:26.7px;height:38.1px;background:#4d82ae;border-radius:4px 0 0 4px;"></div>
<div class="b" style="left:1732px;top:1107.4px;width:103.7px;height:38.1px;background:#1f2123;border-radius:0 4px 4px 0;"></div>
<div class="t" style="left:1718.65px;top:1117px;font-size:21.6px;color:#ececec;-webkit-text-stroke-width:0.4px;transform:translateX(-50%);">Z</div>
<div class="t" style="left:1783.6px;top:1118px;font-size:20.4px;color:#e0e0e0;-webkit-text-stroke-width:0.4px;transform:translateX(-50%);">-1.0</div>
<div class="b" style="left:1504.4px;top:1115.05px;width:23.2px;height:22.8px;background:#4d82b4;border-radius:5px;"></div>
<div class="b" style="left:1674px;top:1115.05px;width:23.2px;height:22.8px;background:#4d82b4;border-radius:5px;"></div>
<div class="b" style="left:1843.8px;top:1115.05px;width:23.2px;height:22.8px;background:#4d82b4;border-radius:5px;"></div>
<div class="t" style="left:1012px;top:1174px;font-size:22px;color:#a6a6a6;-webkit-text-stroke-width:0.4px;letter-spacing:0.4px;">includeChildren</div>
<svg class="b" style="left:1345.6px;top:1174.6px;" width="27.8" height="27.4" viewBox="0 0 26 26"><rect x="0" y="0" width="26" height="26" rx="1.5" fill="#a9a9a9"/><path d="M5.5 13.5 L10.5 18.5 L20.5 7.5" fill="none" stroke="#242424" stroke-width="4"/></svg>
<div class="b" style="left:1397px;top:1184.2px;width:450.7px;height:1.8px;background:#494b4b;border-radius:1px;"></div>
<div class="b" style="left:1855.8px;top:1173px;width:23.2px;height:22.8px;background:#4d82b4;border-radius:5px;"></div>
<div class="t" style="left:1012px;top:1219px;font-size:22px;color:#a6a6a6;-webkit-text-stroke-width:0.4px;letter-spacing:0.3px;">interval</div>
<div class="b" style="left:1346px;top:1211.6px;width:501.7px;height:37.6px;background:#1f2123;border-radius:4px;"></div>
<div class="t" style="left:1596.7px;top:1223px;font-size:20.4px;color:#e0e0e0;-webkit-text-stroke-width:0.4px;transform:translateX(-50%);">0</div>
<div class="b" style="left:1862.2px;top:1226.3px;width:9.6px;height:8.9px;background:#4f4f4f;border-radius:1.5px;"></div>
<div class="b" style="left:1904.9px;top:790px;width:17.3px;height:488px;background:#a0a0a0;border-radius:9px 9px 0 0;"></div>
</div></body></html>
